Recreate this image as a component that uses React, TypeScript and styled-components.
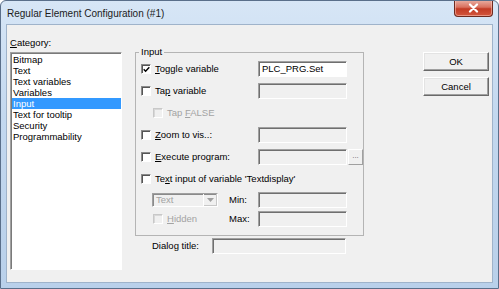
import React from "react";
import styled, { createGlobalStyle } from "styled-components";

const GlobalStyle = createGlobalStyle`
  html, body {
    margin: 0;
    padding: 0;
    background: #ffffff;
  }
  body {
    font-family: "Liberation Sans", Arial, sans-serif;
    font-size: 9.5px;
    color: #000;
  }
`;

const Window = styled.div`
  width: 499px;
  height: 289px;
  box-sizing: border-box;
  display: flex;
  flex-direction: column;
  border: 1px solid #5a6f8a;
  border-radius: 6px 6px 0 0;
  background: linear-gradient(180deg, #d7e6f6 0%, #c3d8ef 40%, #b9d0ea 100%);
  overflow: hidden;
`;

const TitleBar = styled.div`
  height: 23px;
  display: flex;
  justify-content: space-between;
  align-items: flex-start;
  padding: 0 5px 0 6px;
`;

const TitleText = styled.span`
  font-size: 10px;
  line-height: 12px;
  margin-top: 7px;
  color: #1b1b1b;
`;

const CloseButton = styled.div`
  width: 39px;
  height: 17px;
  box-sizing: border-box;
  margin-top: -1px;
  border: 1px solid #6e2a1f;
  border-top: none;
  border-radius: 0 0 4px 4px;
  background: linear-gradient(180deg, #eab1a5 0%, #d9705e 45%, #c23b25 55%, #d3563d 100%);
  box-shadow: inset 0 0 0 1px rgba(255, 210, 200, 0.5);
  display: flex;
  align-items: center;
  justify-content: center;
`;

const Body = styled.div`
  flex: 1;
  display: flex;
  padding: 0 5px 5px 5px;
`;

const Client = styled.div`
  flex: 1;
  display: flex;
  align-items: flex-start;
  box-sizing: border-box;
  border: 1px solid #9fb3ca;
  background: #f0f0f0;
  padding: 12px 0 0 3px;
`;

const LeftColumn = styled.div`
  width: 112px;
  display: flex;
  flex-direction: column;
`;

const Caption = styled.div`
  line-height: 12px;
  margin-bottom: 3px;
  white-space: nowrap;
`;

const ListBox = styled.div`
  height: 218px;
  box-sizing: border-box;
  background: #fff;
  border-style: solid;
  border-width: 1px;
  border-color: #a0a0a0 #ffffff #ffffff #a0a0a0;
  box-shadow: inset 1px 1px 0 #7a7a7a;
  padding: 1px 0 0 1px;
`;

const ListItem = styled.div<{ $selected?: boolean }>`
  line-height: 11px;
  height: 11px;
  padding-left: 1px;
  white-space: nowrap;
  background: ${(p) => (p.$selected ? "#3399ff" : "transparent")};
  color: ${(p) => (p.$selected ? "#fff" : "#000")};
`;

const MiddleColumn = styled.div`
  width: 229px;
  margin: 9px 0 0 13px;
  display: flex;
  flex-direction: column;
`;

const Group = styled.fieldset`
  margin: 0;
  min-width: 0;
  box-sizing: border-box;
  width: 229px;
  padding: 0 0 7px 5px;
  border: 1px solid #b4b4b4;
  display: flex;
  flex-direction: column;
`;

const Legend = styled.legend`
  padding: 0 2px;
  margin-left: -2px;
  line-height: 12px;
`;

const Row = styled.div<{ $h: number }>`
  height: ${(p) => p.$h}px;
  display: flex;
  align-items: center;
`;

const Cell = styled.div<{ $w: number; $indent?: number }>`
  width: ${(p) => p.$w}px;
  padding-left: ${(p) => p.$indent ?? 0}px;
  box-sizing: border-box;
  display: flex;
  align-items: center;
  white-space: nowrap;
`;

const Label = styled.span<{ $disabled?: boolean }>`
  color: ${(p) => (p.$disabled ? "#a3a3a3" : "#000")};
  line-height: 12px;
  white-space: nowrap;
`;

const Box = styled.span<{ $disabled?: boolean }>`
  width: 10px;
  height: 10px;
  box-sizing: border-box;
  margin-right: 4px;
  flex: none;
  display: inline-flex;
  align-items: center;
  justify-content: center;
  background: ${(p) => (p.$disabled ? "#f0f0f0" : "#fff")};
  border-style: solid;
  border-width: 1px;
  border-color: ${(p) =>
    p.$disabled ? "#c8c8c8 #fff #fff #c8c8c8" : "#8a8a8a #ffffff #ffffff #8a8a8a"};
  box-shadow: ${(p) =>
    p.$disabled ? "inset 1px 1px 0 #d8d8d8" : "inset 1px 1px 0 #555"};
`;

const TextBox = styled.div<{ $w: number; $disabled?: boolean }>`
  width: ${(p) => p.$w}px;
  height: 16px;
  box-sizing: border-box;
  flex: none;
  background: ${(p) => (p.$disabled ? "#f0f0f0" : "#fff")};
  border-style: solid;
  border-width: 1px;
  border-color: #a0a0a0 #ffffff #ffffff #a0a0a0;
  box-shadow: inset 1px 1px 0 #6f6f6f;
  padding: 0 0 0 3px;
  line-height: 14px;
  white-space: nowrap;
`;

const BrowseButton = styled.div`
  width: 15px;
  height: 16px;
  margin-left: 1px;
  box-sizing: border-box;
  border-style: solid;
  border-width: 1px;
  border-color: #fff #a0a0a0 #a0a0a0 #fff;
  color: #6a6a6a;
  font-size: 8px;
  line-height: 12px;
  text-align: center;
`;

const Combo = styled.div`
  width: 66px;
  height: 14px;
  box-sizing: border-box;
  display: flex;
  align-items: center;
  justify-content: space-between;
  border-style: solid;
  border-width: 1px;
  border-color: #a0a0a0 #ffffff #ffffff #a0a0a0;
  box-shadow: inset 1px 1px 0 #8a8a8a;
  padding-left: 3px;
  color: #a3a3a3;
  line-height: 12px;
`;

const ComboArrow = styled.div`
  width: 13px;
  height: 12px;
  display: flex;
  align-items: center;
  justify-content: center;
  border-left: 1px solid #fff;
  box-shadow: inset -1px -1px 0 #c8c8c8;
`;

const TitleRow = styled.div`
  display: flex;
  align-items: center;
  margin-top: 2px;
  padding-left: 17px;
`;

const ButtonColumn = styled.div`
  width: 66px;
  margin: 15px 0 0 59px;
  display: flex;
  flex-direction: column;
  gap: 6px;
`;

const PushButton = styled.div`
  height: 19px;
  box-sizing: border-box;
  display: flex;
  align-items: center;
  justify-content: center;
  background: #f0f0f0;
  border-style: solid;
  border-width: 1px;
  border-color: #ffffff #696969 #696969 #ffffff;
  box-shadow: inset -1px -1px 0 #a0a0a0, inset 1px 1px 0 #e3e3e3;
  line-height: 12px;
`;

const Check = ({ checked, disabled }: { checked?: boolean; disabled?: boolean }) => (
  <Box $disabled={disabled}>
    {checked && (
      <svg width="7" height="7" viewBox="0 0 7 7">
        <path d="M0.7 3.2 L2.6 5.2 L6.3 1.2" stroke="#000" strokeWidth="1.4" fill="none" />
      </svg>
    )}
  </Box>
);

const categories = [
  "Bitmap",
  "Text",
  "Text variables",
  "Variables",
  "Input",
  "Text for tooltip",
  "Security",
  "Programmability",
];

export default function App() {
  return (
    <>
      <GlobalStyle />
      <Window>
        <TitleBar>
          <TitleText>Regular Element Configuration (#1)</TitleText>
          <CloseButton>
            <svg width="11" height="10" viewBox="0 0 11 10">
              <path d="M2 1.5 L9 8.5 M9 1.5 L2 8.5" stroke="#fff" strokeWidth="2.2" strokeLinecap="round" />
            </svg>
          </CloseButton>
        </TitleBar>
        <Body>
          <Client>
            <LeftColumn>
              <Caption>
                <u>C</u>ategory:
              </Caption>
              <ListBox>
                {categories.map((c) => (
                  <ListItem key={c} $selected={c === "Input"}>
                    {c}
                  </ListItem>
                ))}
              </ListBox>
            </LeftColumn>

            <MiddleColumn>
              <Group>
                <Legend>Input</Legend>
                <Row $h={22}>
                  <Cell $w={117}>
                    <Check checked />
                    <Label>
                      <u>T</u>oggle variable
                    </Label>
                  </Cell>
                  <TextBox $w={89}>PLC_PRG.Set</TextBox>
                </Row>
                <Row $h={22}>
                  <Cell $w={117}>
                    <Check />
                    <Label>
                      Ta<u>p</u> variable
                    </Label>
                  </Cell>
                  <TextBox $w={89} $disabled />
                </Row>
                <Row $h={22}>
                  <Cell $w={117} $indent={12}>
                    <Check disabled />
                    <Label $disabled>
                      Tap <u>F</u>ALSE
                    </Label>
                  </Cell>
                </Row>
                <Row $h={22}>
                  <Cell $w={117}>
                    <Check />
                    <Label>
                      <u>Z</u>oom to vis..:
                    </Label>
                  </Cell>
                  <TextBox $w={89} $disabled />
                </Row>
                <Row $h={22}>
                  <Cell $w={117}>
                    <Check />
                    <Label>
                      <u>E</u>xecute program:
                    </Label>
                  </Cell>
                  <TextBox $w={89} $disabled />
                  <BrowseButton>...</BrowseButton>
                </Row>
                <Row $h={22}>
                  <Cell $w={220}>
                    <Check />
                    <Label>
                      Te<u>x</u>t input of variable 'Textdisplay'
                    </Label>
                  </Cell>
                </Row>
                <Row $h={19}>
                  <Cell $w={88} $indent={11}>
                    <Combo>
                      Text
                      <ComboArrow>
                        <svg width="7" height="4" viewBox="0 0 7 4">
                          <path d="M0 0 L7 0 L3.5 4 Z" fill="#a0a0a0" />
                        </svg>
                      </ComboArrow>
                    </Combo>
                  </Cell>
                  <Cell $w={29}>
                    <Label>Min:</Label>
                  </Cell>
                  <TextBox $w={89} $disabled />
                </Row>
                <Row $h={19}>
                  <Cell $w={88} $indent={12}>
                    <Check disabled />
                    <Label $disabled>
                      <u>H</u>idden
                    </Label>
                  </Cell>
                  <Cell $w={29}>
                    <Label>Max:</Label>
                  </Cell>
                  <TextBox $w={89} $disabled />
                </Row>
              </Group>
              <TitleRow>
                <Cell $w={60}>
                  <Label>Dialog title:</Label>
                </Cell>
                <TextBox $w={134} $disabled />
              </TitleRow>
            </MiddleColumn>

            <ButtonColumn>
              <PushButton>OK</PushButton>
              <PushButton>Cancel</PushButton>
            </ButtonColumn>
          </Client>
        </Body>
      </Window>
    </>
  );
}
